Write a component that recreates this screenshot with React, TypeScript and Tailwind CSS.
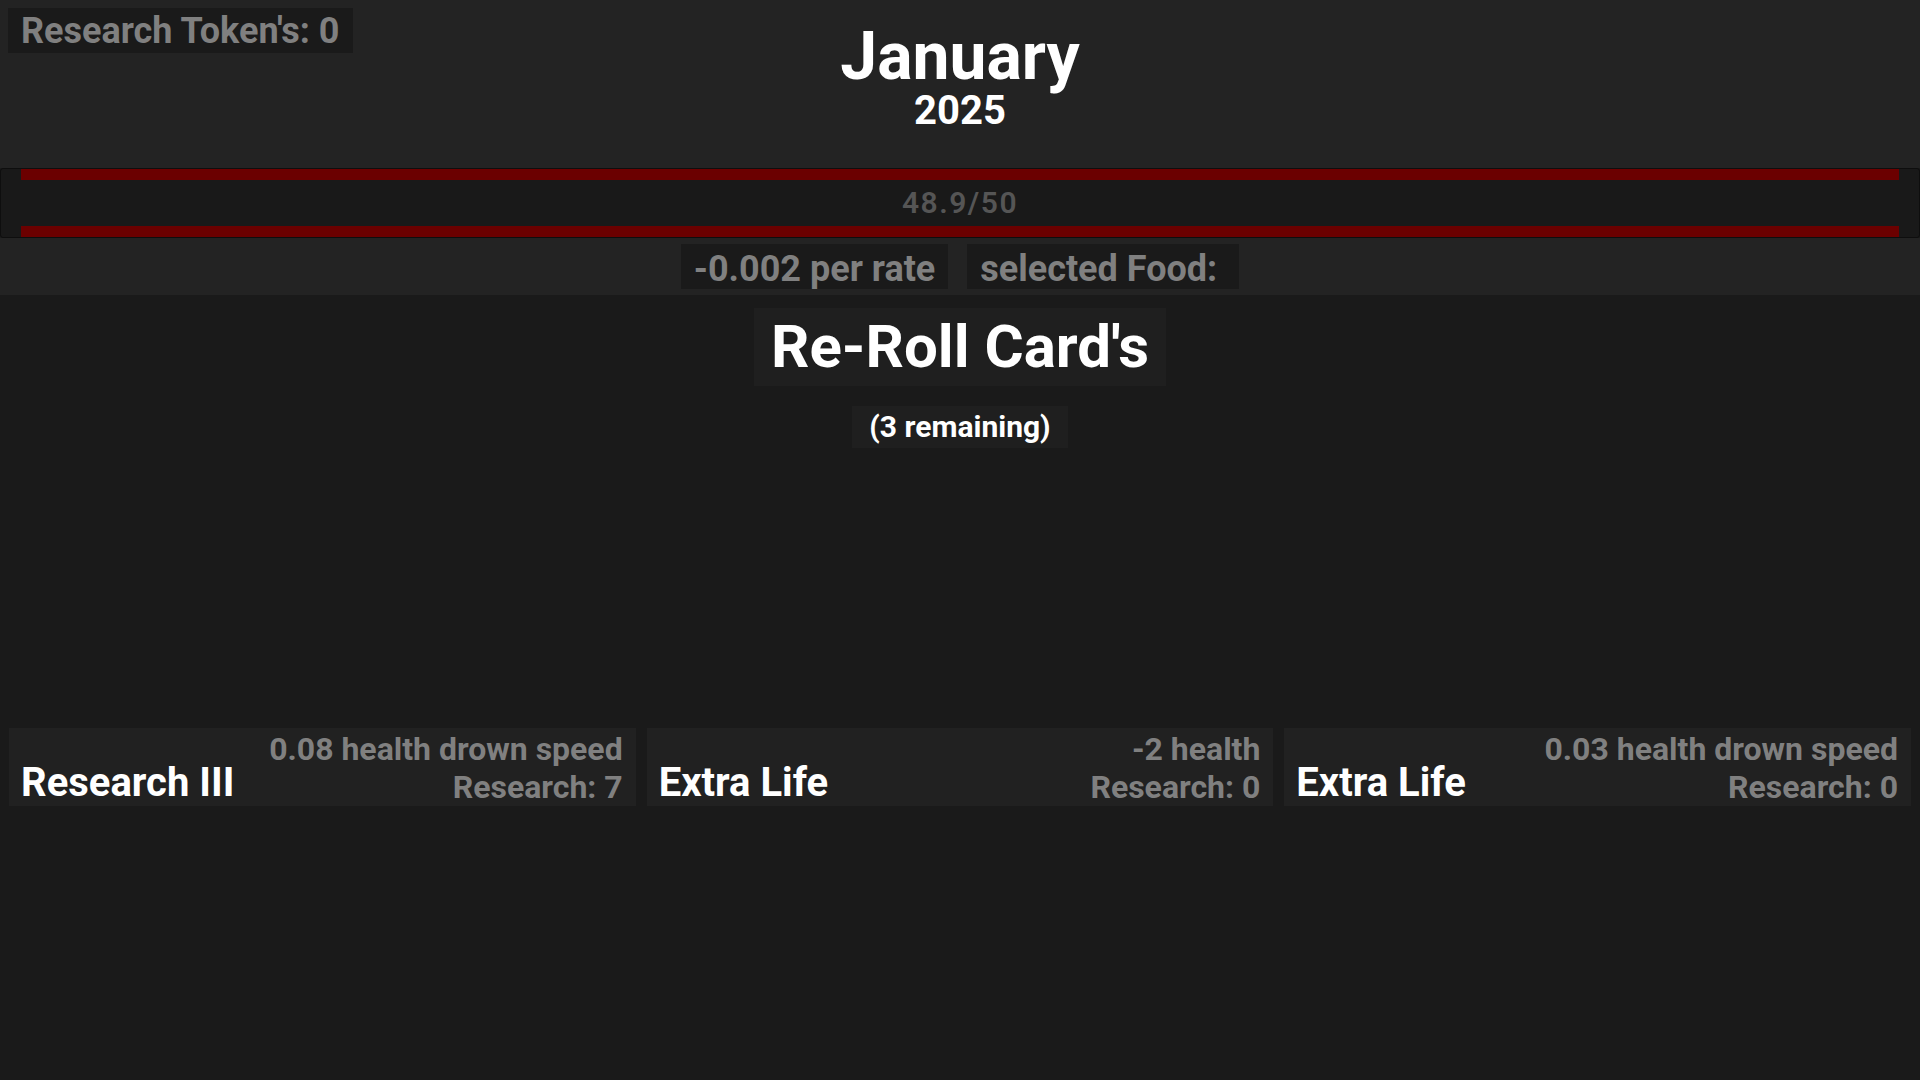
import React from "react";

const cards = [
  { title: "Research III", effect: "0.08 health drown speed", research: "Research: 7" },
  { title: "Extra Life", effect: "-2 health", research: "Research: 0" },
  { title: "Extra Life", effect: "0.03 health drown speed", research: "Research: 0" },
];

export default function App() {
  return (
    <div className="w-full h-screen bg-[#1a1a1a] flex flex-col font-['Roboto','Liberation_Sans',sans-serif] font-bold overflow-hidden">
      {/* Header */}
      <div className="h-[168px] bg-[#232323] grid grid-cols-[1fr_auto_1fr] items-start">
        <div className="pt-[8px] pl-[8px]">
          <div className="inline-flex h-[45px] items-center px-[13px] pt-[2px] bg-[#1a1a1a] text-[36px] leading-[43px] text-[#808080]">
            Research Token's: 0
          </div>
        </div>
        <div className="flex flex-col items-center pt-[24px] text-white">
          <div className="text-[66px] leading-[66px]">January</div>
          <div className="mt-[6px] text-[40px] leading-[30px]">2025</div>
        </div>
        <div />
      </div>

      {/* Health bar */}
      <div className="h-[70px] border border-[#0e0e0e] rounded-[3px] bg-[#191919] flex flex-col">
        <div className="h-[11px] mx-[20px] bg-[#6b0000]" />
        <div className="flex-1 flex items-center justify-center text-[30px] leading-[46px] tracking-[1.5px] font-semibold text-[#555555]">
          48.9/50
        </div>
        <div className="h-[11px] mx-[20px] bg-[#6b0000]" />
      </div>

      {/* Rate row */}
      <div className="h-[57px] bg-[#232323] flex items-center justify-center gap-[19px]">
        <div className="h-[45px] flex items-center px-[13px] pt-[5px] bg-[#1a1a1a] text-[36px] leading-[40px] text-[#808080]">
          -0.002 per rate
        </div>
        <div className="h-[45px] flex items-center pl-[13px] pr-[22px] pt-[5px] bg-[#1a1a1a] text-[36px] leading-[40px] text-[#808080]">
          selected Food:
        </div>
      </div>

      {/* Re-roll */}
      <div className="flex flex-col items-center">
        <div className="mt-[13px] h-[78px] flex items-center px-[17px] bg-[#1f1f1f] text-[60px] leading-[78px] text-white">
          Re-Roll Card's
        </div>
        <div className="mt-[20px] h-[42px] flex items-center px-[17px] bg-[#1f1f1f] text-[30px] leading-[42px] text-white">
          (3 remaining)
        </div>
      </div>

      {/* Cards */}
      <div className="mt-[280px] flex gap-[11px] pl-[9px] pr-[9px]">
        {cards.map((c, i) => (
          <div key={i} className="flex-1 h-[78px] bg-[#212121] flex justify-between items-center pl-[12px] pr-[13px]">
            <div className="self-end pb-[3px] text-[40px] leading-[40px] text-white">{c.title}</div>
            <div className="flex flex-col items-end pt-[2px] text-[32px] leading-[38px] text-[#808080]">
              <div>{c.effect}</div>
              <div>{c.research}</div>
            </div>
          </div>
        ))}
      </div>
    </div>
  );
}
